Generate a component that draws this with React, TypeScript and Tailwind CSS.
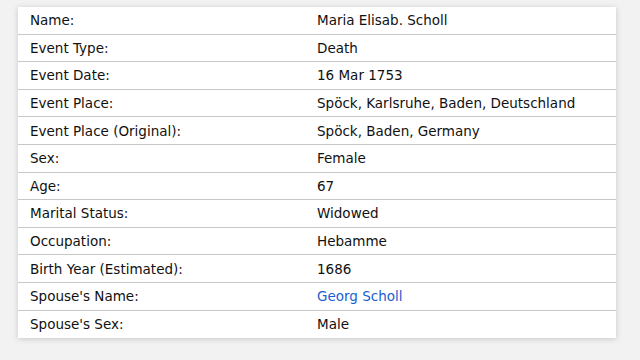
const rows: { label: string; value: string; link?: boolean }[] = [
  { label: "Name:", value: "Maria Elisab. Scholl" },
  { label: "Event Type:", value: "Death" },
  { label: "Event Date:", value: "16 Mar 1753" },
  { label: "Event Place:", value: "Spöck, Karlsruhe, Baden, Deutschland" },
  { label: "Event Place (Original):", value: "Spöck, Baden, Germany" },
  { label: "Sex:", value: "Female" },
  { label: "Age:", value: "67" },
  { label: "Marital Status:", value: "Widowed" },
  { label: "Occupation:", value: "Hebamme" },
  { label: "Birth Year (Estimated):", value: "1686" },
  { label: "Spouse's Name:", value: "Georg Scholl", link: true },
  { label: "Spouse's Sex:", value: "Male" },
];

export default function App() {
  return (
    <div className="w-[640px] h-[360px] bg-[#f2f2f2] pt-[7px] pl-[18px] font-['DejaVu_Sans',Verdana,sans-serif] text-[13.5px] text-[#111]">
      <div className="w-[598px] bg-white shadow-[0_1px_6px_rgba(0,0,0,0.18)]">
        {rows.map((row, i) => (
          <div
            key={`row-${i}`}
            className={`flex h-[27.6px] items-center ${i < rows.length - 1 ? "border-b border-[#c8c8c8]" : ""}`}
          >
            <div className="w-[287px] pl-3">{row.label}</div>
            <div className="pl-3">
              {row.link ? <a className="text-[#1a5fd1]">{row.value}</a> : row.value}
            </div>
          </div>
        ))}
      </div>
    </div>
  );
}
